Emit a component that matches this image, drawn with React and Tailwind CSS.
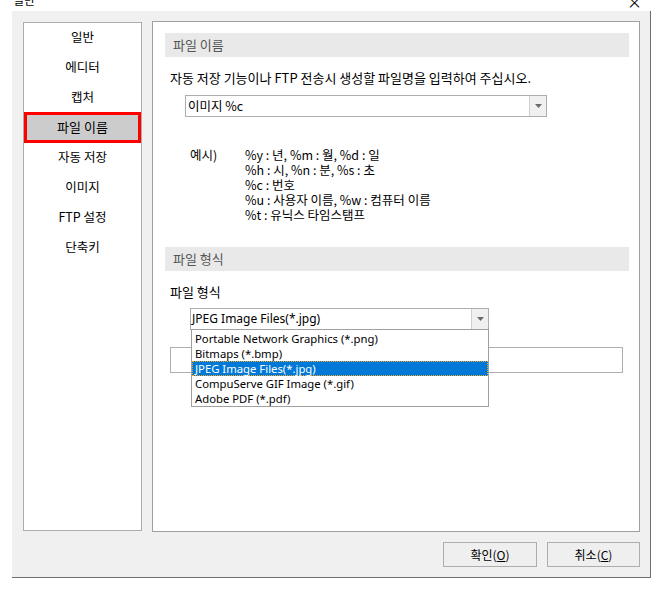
import React from "react";

const KR = { fontFamily: '"Noto Sans CJK KR", "Noto Sans", sans-serif' };
const EN = { fontFamily: '"Noto Sans", "Noto Sans CJK KR", sans-serif' };

function Nav({ label, selected }) {
  if (selected) {
    return (
      <div className="h-[30px] flex items-center justify-center">
        <div className="w-[117px] h-[31px] bg-[#cccccc] border-[3px] border-[#ff0000] flex items-center justify-center text-[13px] text-black">
          {label}
        </div>
      </div>
    );
  }
  return (
    <div className="h-[30px] flex items-center justify-center text-[12.5px] text-black">
      {label}
    </div>
  );
}

function Header({ children }) {
  return (
    <div className="ml-[12px] w-[464px] h-[24px] bg-[#e9e9e9] flex items-center pl-[8px] text-[13px] text-[#555555]">
      {children}
    </div>
  );
}

function Arrow() {
  return (
    <div className="w-[17px] h-full border-l border-[#cfcfcf] bg-[#f0f0f0] flex items-center justify-center">
      <svg width="7" height="4" viewBox="0 0 7 4">
        <path d="M0 0 L7 0 L3.5 4 Z" fill="#6a6a6a" />
      </svg>
    </div>
  );
}

export default function App() {
  const navs = ["일반", "에디터", "캡처", "파일 이름", "자동 저장", "이미지", "FTP 설정", "단축키"];
  const items = [
    "Portable Network Graphics (*.png)",
    "Bitmaps (*.bmp)",
    "JPEG Image Files(*.jpg)",
    "CompuServe GIF Image (*.gif)",
    "Adobe PDF (*.pdf)",
  ];
  return (
    <div className="w-[661px] h-[593px] bg-white overflow-hidden" style={KR}>
      <div className="h-[11px] overflow-hidden flex justify-between">
        <div className="ml-[13px] -mt-[9px] text-[12px] text-black">일반</div>
        <div className="mr-[19px] -mt-[9px] text-[15px] text-black">×</div>
      </div>
      <div className="ml-[12px] w-[639px] h-[567px] bg-[#f0f0f0] border-r border-b border-[#6e6e6e] flex flex-col">
        <div className="flex pl-[11px] pt-[10px] gap-[10px] items-start">
          <div className="mt-[1px] w-[119px] h-[509px] bg-white border border-[#adadad] -pt-[1px]">
            <div className="-mt-[1px]">
              {navs.map((n) => (
                <Nav key={n} label={n} selected={n === "파일 이름"} />
              ))}
            </div>
          </div>
          <div className="w-[488px] h-[511px] bg-white border border-[#a0a0a0] pt-[11px] relative">
            <Header>파일 이름</Header>
            <div className="ml-[17px] mt-[12px] text-[13px] leading-[17px] text-black">
              자동 저장 기능이나 FTP 전송시 생성할 파일명을 입력하여 주십시오.
            </div>
            <div className="ml-[32px] mt-[9px] w-[362px] h-[22px] border border-[#adadad] flex items-center justify-between bg-white">
              <span className="pl-[2px] text-[12.5px] text-black">이미지 %c</span>
              <Arrow />
            </div>
            <div className="flex mt-[30px] ml-[37px] text-[12.5px] leading-[15px] text-black">
              <div className="w-[55px]">예시)</div>
              <div className="flex flex-col">
                <span>%y : 년, %m : 월, %d : 일</span>
                <span>%h : 시, %n : 분, %s : 초</span>
                <span>%c : 번호</span>
                <span>%u : 사용자 이름, %w : 컴퓨터 이름</span>
                <span>%t : 유닉스 타임스탬프</span>
              </div>
            </div>
            <div className="mt-[25px]">
              <Header>파일 형식</Header>
            </div>
            <div className="ml-[17px] mt-[13px] text-[13px] leading-[16px] text-black">파일 형식</div>
            <div className="ml-[37px] mt-[8px] w-[299px] h-[22px] border border-[#adadad] flex items-center justify-between bg-white relative">
              <span className="pl-[1px] text-[12px] text-black" style={EN}>JPEG Image Files(*.jpg)</span>
              <Arrow />
              <div className="absolute left-[0px] top-[20px] w-[298px] h-[78px] bg-white border border-[#a0a0a0] z-10 flex flex-col py-[1px]" style={EN}>
                {items.map((it, i) =>
                  i === 2 ? (
                    <div key={it} className="h-[15px] leading-[13px] bg-[#0078d7] text-white text-[11.3px] pl-[2px] border border-dotted border-[#f5a623]">
                      {it}
                    </div>
                  ) : (
                    <div key={it} className="h-[15px] leading-[15px] text-black text-[11.3px] pl-[3px]">
                      {it}
                    </div>
                  )
                )}
              </div>
            </div>
            <div className="ml-[17px] mt-[17px] w-[453px] h-[26px] border border-[#adadad] bg-white"></div>
          </div>
        </div>
        <div className="flex justify-end gap-[10px] pr-[10px] mt-[10px]">
          <div className="w-[94px] h-[25px] border border-[#adadad] bg-[#efefef] flex items-center justify-center text-[12px] text-black">
            확인(<span className="underline">O</span>)
          </div>
          <div className="w-[93px] h-[25px] border border-[#adadad] bg-[#efefef] flex items-center justify-center text-[12px] text-black">
            취소(<span className="underline">C</span>)
          </div>
        </div>
      </div>
    </div>
  );
}
